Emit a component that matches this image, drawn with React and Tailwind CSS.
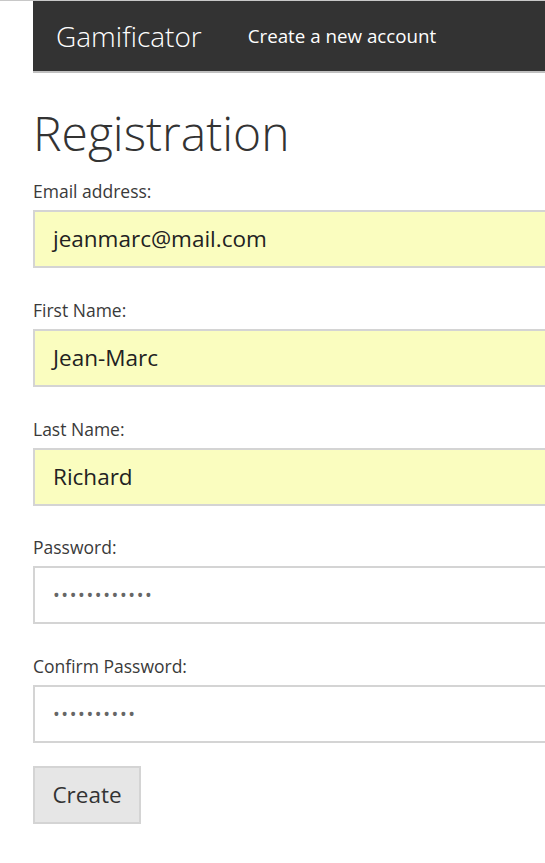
import React from 'react';

const fields = [
  { label: 'Email address:', value: 'jeanmarc@mail.com', type: 'text', filled: true },
  { label: 'First Name:', value: 'Jean-Marc', type: 'text', filled: true },
  { label: 'Last Name:', value: 'Richard', type: 'text', filled: true },
  { label: 'Password:', value: '••••••••••••', type: 'password', filled: false },
  { label: 'Confirm Password:', value: '••••••••••', type: 'password', filled: false },
];

const App = () => {
  return (
    <div className="w-[545px] h-[863px] overflow-hidden bg-white border-t border-[#c8c8c8] font-['Open_Sans',sans-serif] text-[#333]">
      {/* Header */}
      <div className="ml-[33px] w-[600px] h-[72px] bg-[#333333] border-b-2 border-[#c0c0c0] flex items-center">
        <span className="ml-[23px] text-[28px] font-light text-white">Gamificator</span>
        <span className="ml-[46px] text-[18.75px] text-white">Create a new account</span>
      </div>

      <div className="ml-[33px] w-[600px]">
        <h1 className="mt-[32px] text-[48px] font-light leading-[56px] text-[#333]">Registration</h1>

        <form className="mt-[18px] flex flex-col">
          {fields.map((f) => (
            <div key={f.label} className="mb-[29.75px]">
              <label className="block text-[17.5px] leading-[24px] text-[#3a3a3a] mb-[7px]">{f.label}</label>
              <div
                className={`h-[58px] border-2 border-[#d4d4d4] flex items-center pl-[18px] ${
                  f.filled ? 'bg-[#fafdbf] text-[22.5px] text-[#222]' : 'bg-white text-[18px] text-[#666] tracking-[1.6px]'
                }`}
              >
                {f.value}
              </div>
            </div>
          ))}
          <button
            type="button"
            className="self-start -mt-[7px] w-[108px] h-[58px] bg-[#e6e6e6] border-2 border-[#d4d4d4] text-[22.5px] text-[#333]"
          >
            Create
          </button>
        </form>
      </div>
    </div>
  );
};

export default App;
